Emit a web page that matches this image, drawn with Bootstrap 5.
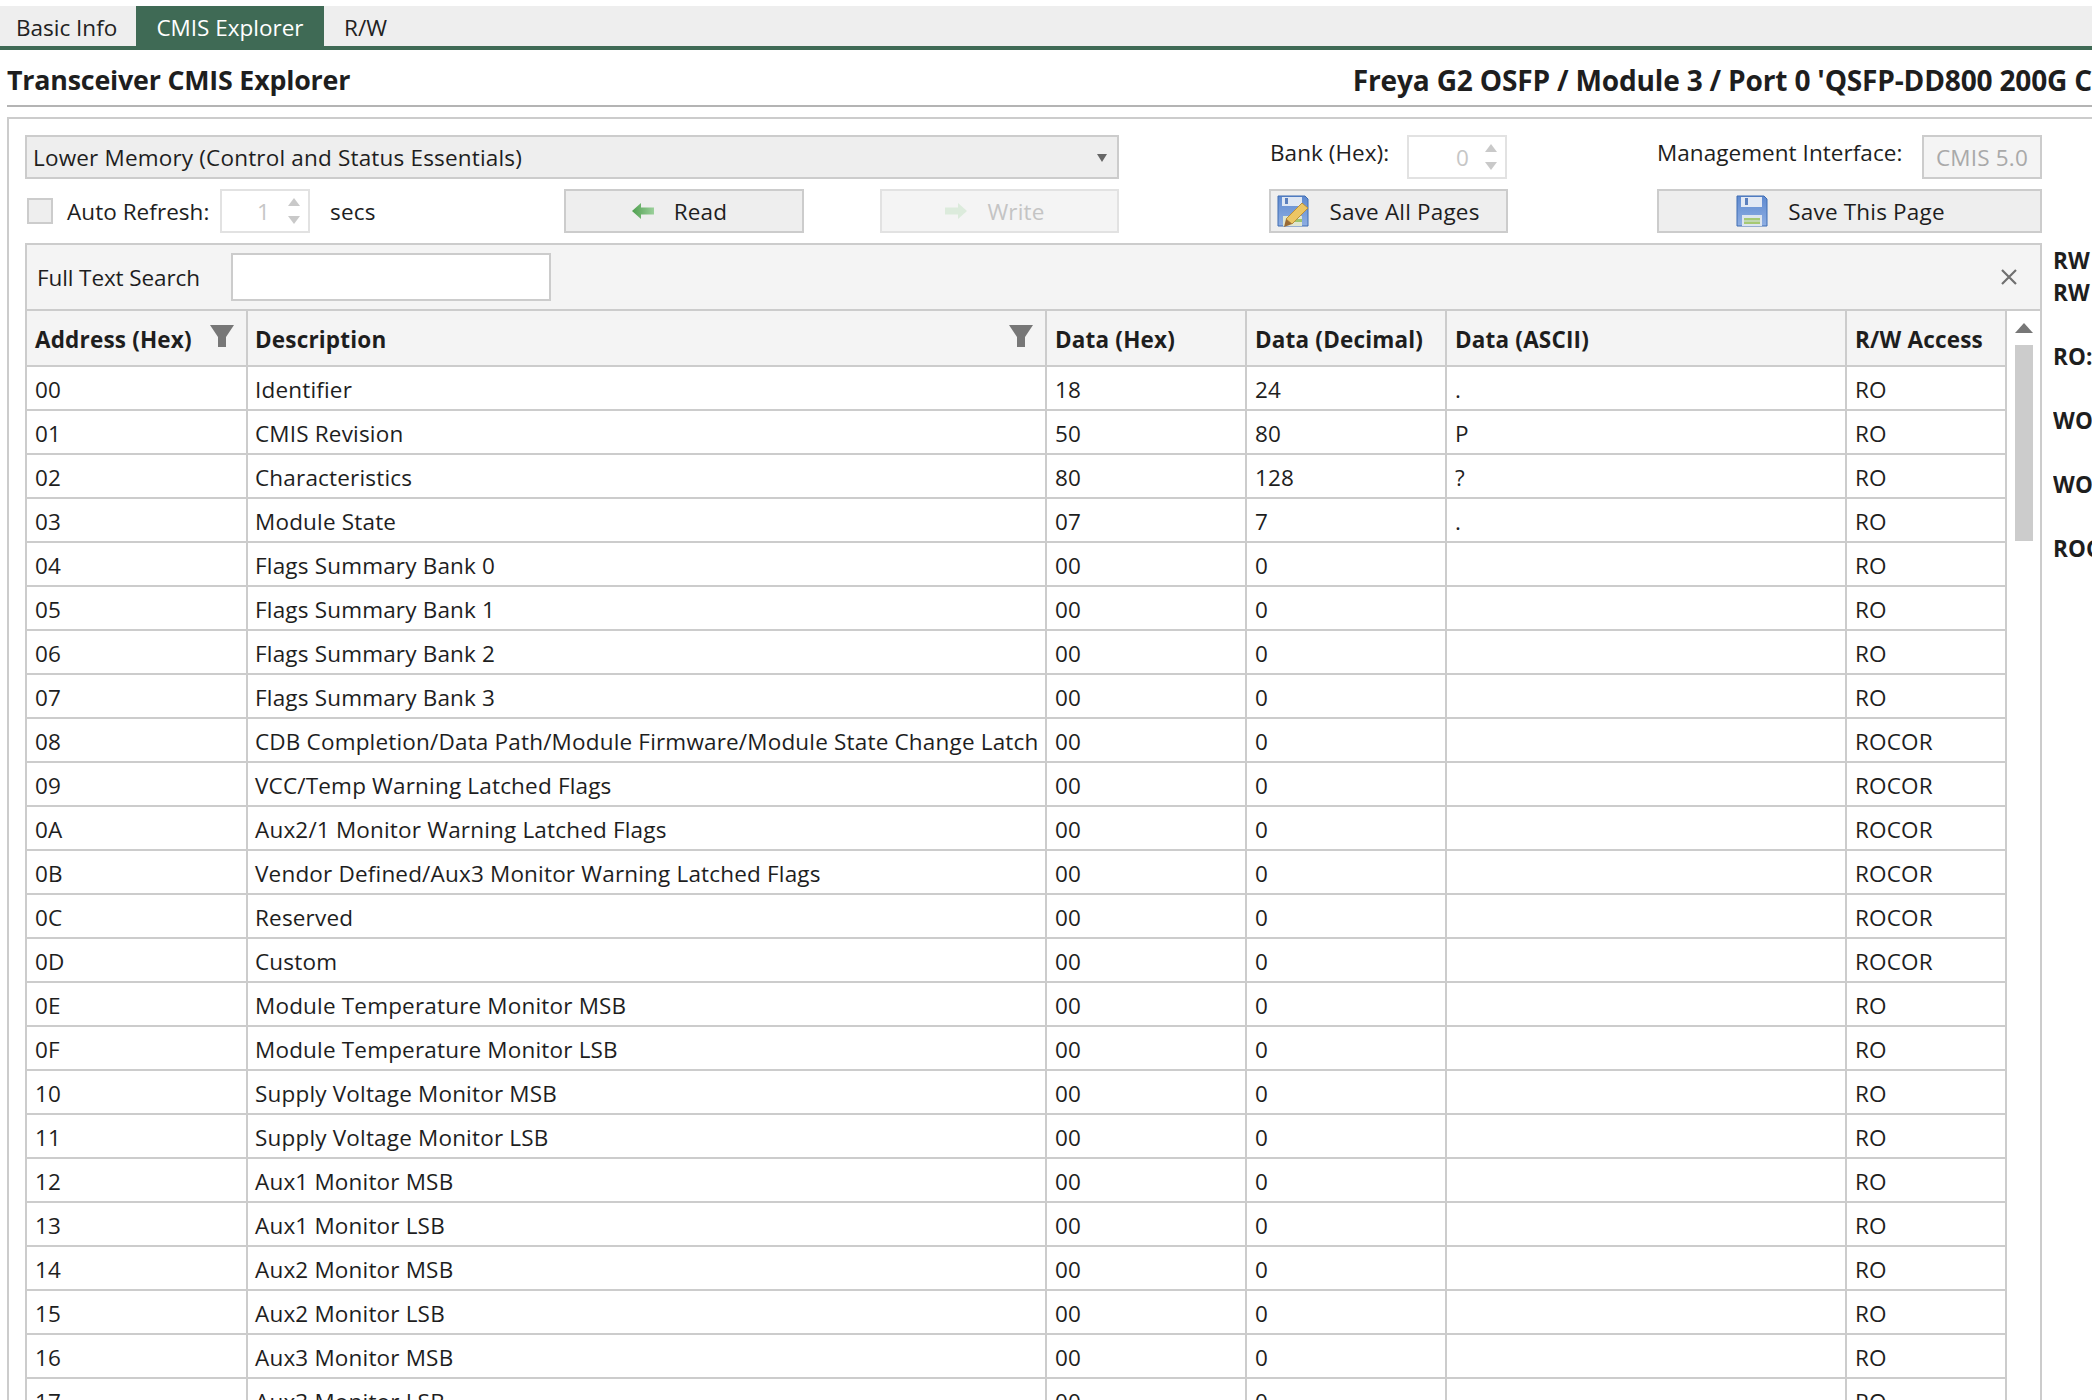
<!DOCTYPE html>
<html lang="en">
<head>
<meta charset="utf-8">
<title>Transceiver CMIS Explorer</title>
<link href="https://cdn.jsdelivr.net/npm/bootstrap@5.3.0/dist/css/bootstrap.min.css" rel="stylesheet">
<style>
html,body{height:1400px;overflow:hidden;background:#fff}
body{font-family:"Open Sans","Noto Sans",sans-serif;font-size:22.5px;color:#1e1e1e;padding-top:6px;letter-spacing:.18px}
.tabbar{height:44px;background:#eee;border-bottom:4px solid #3f6a55}
.tabitem{height:44px;padding:0 16px;line-height:43px;color:#222;text-decoration:none;white-space:nowrap;letter-spacing:0}
.tabitem.first{width:136px}
.tabitem.on{width:188px;background:#3f6a55;color:#fff;text-align:center;padding:0}
.tabitem.last{padding-left:20px}
.headline{height:57px;margin-left:7px;border-bottom:2px solid #b4b4b4;font-weight:700;font-size:26.8px;white-space:nowrap;overflow:hidden;padding-top:6px;letter-spacing:-.2px}
.headline .rightside{margin-left:auto;flex:0 0 737px;font-size:28.1px}
.panelbox{margin:10px 0 0 7px;border:2px solid #ccc;border-right:0;border-bottom:0;padding:16px 0 0 16px;height:1283px;width:2085px;overflow:hidden}
.toolrow{height:44px}
.toolrow+.toolrow{margin-top:10px}
.selectbox{width:1094px;height:44px;background:#eee;border:2px solid #ccc;padding:0 6px;line-height:41px;position:relative}
.selectbox::after{content:"";position:absolute;right:10px;top:17px;border:5.5px solid transparent;border-top:8px solid #666;border-bottom:0}
.plainlabel{white-space:nowrap;letter-spacing:.05px}
.bankgap{margin-left:151px;width:137px;margin-top:-9px}
.mgmtgap{margin-left:150px;width:265px;margin-top:-9px}
.spinbox{height:44px;border:2px solid #e2e2e2;background:#fff;color:#c6c6c6;position:relative;text-align:right;line-height:42px}
.spinbox::before,.spinbox::after{content:"";position:absolute;right:8px;border:6.5px solid transparent}
.spinbox::before{top:7px;border-bottom:8px solid #c9c9c9;border-top:0}
.spinbox::after{bottom:7px;border-top:8px solid #c9c9c9;border-bottom:0}
.spinbank{width:100px;padding-right:36px;flex:none}
.spinsecs{width:90px;padding-right:38px;margin-left:11px;flex:none}
.versionbox{width:120px;height:44px;border:2px solid #ccc;background:#f4f4f4;color:#a9a9a9;text-align:center;line-height:42px;flex:none;white-space:nowrap}
.tick{width:26px;height:26px;margin:0 14px 0 2px;background:#eee;border:2px solid #ccc;flex:none}
.refreshlabel{width:142px;padding-top:2px}
.secslabel{margin-left:20px;width:234px;flex:none;padding-top:2px}
.actionbtn{height:44px;border:2px solid #ccc;background:#eee;border-radius:0;padding:0;color:#1e1e1e;font-size:22.5px;display:flex;align-items:center;justify-content:center;letter-spacing:.18px;flex:none;white-space:nowrap}
.actionbtn:disabled{opacity:1;background:#f4f4f4;border-color:#e2e2e2;color:#c4c4c4}
.actionbtn .caption{padding-top:2px}
.shiftsmall{padding-right:9px}
.shiftbig{padding-right:20px}
.shiftmid{padding-right:18px}
.w240{width:240px}
.w239{width:239px}
.gapwrite{margin-left:76px}
.gapsaveall{margin-left:150px}
.gapsavethis{margin-left:149px}
.w385{width:385px}
.flatpic{flex:none;margin-right:20px}
.lowerarea{margin-top:10px}
.gridshell{width:2017px;border:2px solid #ccc;border-bottom:0;flex:none}
.searchbar{height:66px;background:#f4f4f4;border-bottom:2px solid #ccc;padding:0 22px 0 10px}
.searchbar label{width:194px;flex:none;letter-spacing:-.1px;padding-top:2px}
.searchbar input{width:320px;height:48px;border:2px solid #ccc;border-radius:0;background:#fff;flex:none}
.datagrid{table-layout:fixed;width:1980px;margin:0;border-collapse:separate;border-spacing:0;flex:none}
.datagrid th,.datagrid td{border:0;border-right:2px solid #ccc;border-bottom:2px solid #ccc;padding:4px 0 0 8px;height:44px;vertical-align:middle;white-space:nowrap;color:#1e1e1e;box-shadow:none;background:#fff;font-weight:400;overflow:hidden}
.datagrid th{height:56px;background:#f4f4f4;font-weight:700;position:relative;padding-top:3px}
.datagrid th:nth-child(2),.datagrid td:nth-child(2){padding-left:7px}
.funnel{position:absolute;right:12px;top:14px}
.scrollstrip{flex:1;position:relative;border-bottom:2px solid #fff}
.scrollstrip::before{content:"";position:absolute;left:8px;top:12px;border:9px solid transparent;border-bottom:10px solid #777;border-top:0}
.scrollthumb{position:absolute;left:8px;top:34px;width:18px;height:196px;background:#ccc}
.sidenotes{margin-left:11px;margin-top:2px;font-weight:700;white-space:nowrap;width:39px;overflow:hidden}
.sidenotes div{height:32px;line-height:32px}
.sidenotes .sp2{margin-top:32px}
</style>
</head>
<body>
<svg width="0" height="0" class="position-absolute" aria-hidden="true">
  <defs>
    <linearGradient id="diskbody" x1="0" y1="0" x2="0" y2="1"><stop offset="0" stop-color="#5f8ad0"/><stop offset="1" stop-color="#8eaee2"/></linearGradient>
    <linearGradient id="arrowfill" x1="0" y1="0" x2="1" y2="0"><stop offset="0" stop-color="#4f9f4f"/><stop offset="1" stop-color="#9bd09b"/></linearGradient>
  </defs>
</svg>
<nav class="tabbar d-flex">
  <a class="tabitem first" href="#">Basic Info</a>
  <a class="tabitem on" href="#">CMIS Explorer</a>
  <a class="tabitem last" href="#">R/W</a>
</nav>
<header class="headline d-flex align-items-center">
  <span>Transceiver CMIS Explorer</span>
  <span class="rightside">Freya G2 OSFP / Module 3 / Port 0 'QSFP-DD800 200G C</span>
</header>
<main class="panelbox">
  <div class="toolrow d-flex align-items-center">
    <div class="selectbox">Lower Memory (Control and Status Essentials)</div>
    <label class="plainlabel bankgap">Bank (Hex):</label>
    <div class="spinbox spinbank">0</div>
    <label class="plainlabel mgmtgap">Management Interface:</label>
    <div class="versionbox">CMIS 5.0</div>
  </div>
  <div class="toolrow d-flex align-items-center">
    <span class="tick"></span>
    <label class="plainlabel refreshlabel">Auto Refresh:</label>
    <div class="spinbox spinsecs">1</div>
    <span class="secslabel">secs</span>
    <button class="btn actionbtn w240 shiftsmall" type="button">
      <svg class="flatpic" width="22" height="16" viewBox="0 0 22 16"><path d="M0 8 9 0v4.5h13v7H9V16z" fill="url(#arrowfill)"/></svg><span class="caption">Read</span>
    </button>
    <button class="btn actionbtn w239 gapwrite shiftsmall" type="button" disabled>
      <svg class="flatpic" width="22" height="16" viewBox="0 0 22 16"><path d="M22 8 13 0v4.5H0v7h13V16z" fill="#dcebdc"/></svg><span class="caption">Write</span>
    </button>
    <button class="btn actionbtn w239 gapsaveall shiftbig" type="button">
      <svg class="flatpic" width="32" height="32" viewBox="0 0 32 32"><path d="M1 1h27l3 3v27H1z" fill="url(#diskbody)" stroke="#3f6db2"/><path d="M5 2h20v9H5z" fill="#dfe7f3"/><path d="M8 3h3v6H8z" fill="#5b7fbd"/><path d="M6 21h19v10H6z" fill="#dfe5d0"/><path d="M17 24h8v3h-8z" fill="#9cc46c"/><path d="M9 24 25 8l6 5-16 16z" fill="#ecc664" stroke="#b98f3c"/><path d="M9 24l6 5-8 3z" fill="#9a6a34"/></svg><span class="caption">Save All Pages</span>
    </button>
    <button class="btn actionbtn w385 gapsavethis shiftmid" type="button">
      <svg class="flatpic" width="32" height="32" viewBox="0 0 32 32"><path d="M1 1h27l3 3v27H1z" fill="url(#diskbody)" stroke="#3f6db2"/><path d="M5 2h21v10H5z" fill="#e3e9f4"/><path d="M9 3h3v7H9z" fill="#5b7fbd"/><path d="M6 20h20v11H6z" fill="#dde5ee"/><path d="M8 23h16v2.500H8zM8 26.500h16V29H8z" fill="#a6c973"/></svg><span class="caption">Save This Page</span>
    </button>
  </div>
  <div class="lowerarea d-flex align-items-start">
    <section class="gridshell">
      <div class="searchbar d-flex align-items-center">
        <label class="plainlabel">Full Text Search</label>
        <input class="form-control" type="text" aria-label="Full Text Search">
        <svg class="ms-auto" width="18" height="18" viewBox="0 0 18 18"><path d="M2 2l14 14M16 2 2 16" stroke="#707070" stroke-width="2.200"/></svg>
      </div>
      <div class="d-flex">
        <table class="table datagrid">
          <colgroup><col style="width:221px"><col style="width:799px"><col style="width:200px"><col style="width:200px"><col style="width:400px"><col style="width:160px"></colgroup>
          <thead><tr>
            <th>Address (Hex)<svg class="funnel" width="24" height="22" viewBox="0 0 24 22"><path d="M0 0h24l-8 12v10H8V12z" fill="#777"/></svg></th>
            <th>Description<svg class="funnel" width="24" height="22" viewBox="0 0 24 22"><path d="M0 0h24l-8 12v10H8V12z" fill="#777"/></svg></th>
            <th>Data (Hex)</th><th>Data (Decimal)</th><th>Data (ASCII)</th><th>R/W Access</th>
          </tr></thead>
          <tbody>
            <tr><td>00</td><td>Identifier</td><td>18</td><td>24</td><td>.</td><td>RO</td></tr>
            <tr><td>01</td><td>CMIS Revision</td><td>50</td><td>80</td><td>P</td><td>RO</td></tr>
            <tr><td>02</td><td>Characteristics</td><td>80</td><td>128</td><td>?</td><td>RO</td></tr>
            <tr><td>03</td><td>Module State</td><td>07</td><td>7</td><td>.</td><td>RO</td></tr>
            <tr><td>04</td><td>Flags Summary Bank 0</td><td>00</td><td>0</td><td></td><td>RO</td></tr>
            <tr><td>05</td><td>Flags Summary Bank 1</td><td>00</td><td>0</td><td></td><td>RO</td></tr>
            <tr><td>06</td><td>Flags Summary Bank 2</td><td>00</td><td>0</td><td></td><td>RO</td></tr>
            <tr><td>07</td><td>Flags Summary Bank 3</td><td>00</td><td>0</td><td></td><td>RO</td></tr>
            <tr><td>08</td><td>CDB Completion/Data Path/Module Firmware/Module State Change Latch</td><td>00</td><td>0</td><td></td><td>ROCOR</td></tr>
            <tr><td>09</td><td>VCC/Temp Warning Latched Flags</td><td>00</td><td>0</td><td></td><td>ROCOR</td></tr>
            <tr><td>0A</td><td>Aux2/1 Monitor Warning Latched Flags</td><td>00</td><td>0</td><td></td><td>ROCOR</td></tr>
            <tr><td>0B</td><td>Vendor Defined/Aux3 Monitor Warning Latched Flags</td><td>00</td><td>0</td><td></td><td>ROCOR</td></tr>
            <tr><td>0C</td><td>Reserved</td><td>00</td><td>0</td><td></td><td>ROCOR</td></tr>
            <tr><td>0D</td><td>Custom</td><td>00</td><td>0</td><td></td><td>ROCOR</td></tr>
            <tr><td>0E</td><td>Module Temperature Monitor MSB</td><td>00</td><td>0</td><td></td><td>RO</td></tr>
            <tr><td>0F</td><td>Module Temperature Monitor LSB</td><td>00</td><td>0</td><td></td><td>RO</td></tr>
            <tr><td>10</td><td>Supply Voltage Monitor MSB</td><td>00</td><td>0</td><td></td><td>RO</td></tr>
            <tr><td>11</td><td>Supply Voltage Monitor LSB</td><td>00</td><td>0</td><td></td><td>RO</td></tr>
            <tr><td>12</td><td>Aux1 Monitor MSB</td><td>00</td><td>0</td><td></td><td>RO</td></tr>
            <tr><td>13</td><td>Aux1 Monitor LSB</td><td>00</td><td>0</td><td></td><td>RO</td></tr>
            <tr><td>14</td><td>Aux2 Monitor MSB</td><td>00</td><td>0</td><td></td><td>RO</td></tr>
            <tr><td>15</td><td>Aux2 Monitor LSB</td><td>00</td><td>0</td><td></td><td>RO</td></tr>
            <tr><td>16</td><td>Aux3 Monitor MSB</td><td>00</td><td>0</td><td></td><td>RO</td></tr>
            <tr><td>17</td><td>Aux3 Monitor LSB</td><td>00</td><td>0</td><td></td><td>RO</td></tr>
          </tbody>
        </table>
        <div class="scrollstrip"><div class="scrollthumb"></div></div>
      </div>
    </section>
    <aside class="sidenotes">
      <div>RW</div>
      <div>RW</div>
      <div class="sp2">RO:</div>
      <div class="sp2">WO</div>
      <div class="sp2">WO</div>
      <div class="sp2">ROC</div>
    </aside>
  </div>
</main>
<script src="https://cdn.jsdelivr.net/npm/bootstrap@5.3.0/dist/js/bootstrap.bundle.min.js"></script>
</body>
</html>
